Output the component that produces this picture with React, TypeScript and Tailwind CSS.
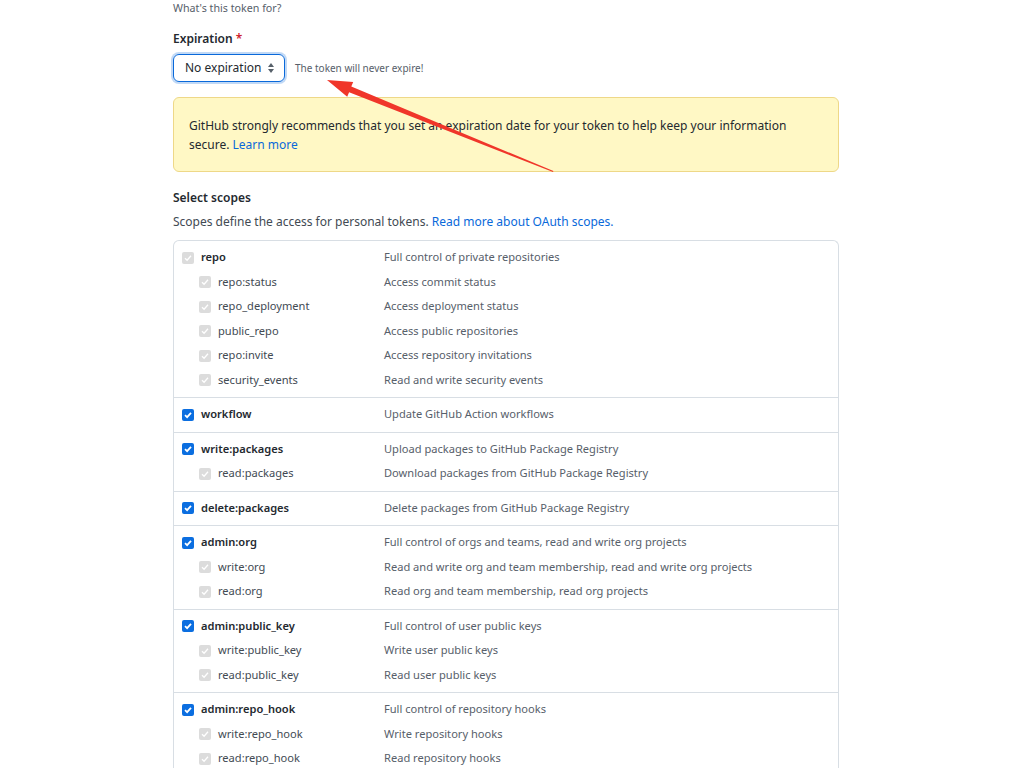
import React from 'react';

type Scope = { name: string; desc: string; checked?: boolean; subs: [string, string][] };

const SCOPES: Scope[] = [
  {
    name: 'repo',
    desc: 'Full control of private repositories',
    subs: [
      ['repo:status', 'Access commit status'],
      ['repo_deployment', 'Access deployment status'],
      ['public_repo', 'Access public repositories'],
      ['repo:invite', 'Access repository invitations'],
      ['security_events', 'Read and write security events'],
    ],
  },
  { name: 'workflow', desc: 'Update GitHub Action workflows', checked: true, subs: [] },
  {
    name: 'write:packages',
    desc: 'Upload packages to GitHub Package Registry',
    checked: true,
    subs: [['read:packages', 'Download packages from GitHub Package Registry']],
  },
  { name: 'delete:packages', desc: 'Delete packages from GitHub Package Registry', checked: true, subs: [] },
  {
    name: 'admin:org',
    desc: 'Full control of orgs and teams, read and write org projects',
    checked: true,
    subs: [
      ['write:org', 'Read and write org and team membership, read and write org projects'],
      ['read:org', 'Read org and team membership, read org projects'],
    ],
  },
  {
    name: 'admin:public_key',
    desc: 'Full control of user public keys',
    checked: true,
    subs: [
      ['write:public_key', 'Write user public keys'],
      ['read:public_key', 'Read user public keys'],
    ],
  },
  {
    name: 'admin:repo_hook',
    desc: 'Full control of repository hooks',
    checked: true,
    subs: [
      ['write:repo_hook', 'Write repository hooks'],
      ['read:repo_hook', 'Read repository hooks'],
    ],
  },
];

const Box = ({ on }: { on?: boolean }) => (
  <span
    className={
      on
        ? 'w-[12px] h-[12px] rounded-[2px] bg-[#0b6ee0] flex items-center justify-center shrink-0'
        : 'w-[12px] h-[12px] rounded-[2px] bg-[#dcdcdc] flex items-center justify-center shrink-0'
    }
  >
    <svg width="10" height="10" viewBox="0 0 10 10">
      <path d="M2 5.2 L4.1 7.2 L8 2.8" fill="none" stroke="white" strokeWidth={on ? 1.8 : 1.3} />
    </svg>
  </span>
);

export default function App() {
  return (
    <div className="relative min-h-[768px] bg-white text-[12px] text-[#24292f]" style={{ fontFamily: '"Noto Sans", "Open Sans", Arial, sans-serif' }}>
      <div className="ml-[173px] w-[666px]">
        <div className="text-[10.7px] text-[#57606a] leading-[16px]">What's this token for?</div>

        <div className="mt-[15px] font-semibold leading-[16px]">
          Expiration <span className="text-[#cf222e]">*</span>
        </div>
        <div className="mt-[7px] flex items-center gap-[10px]">
          <div className="h-[28px] w-[112px] rounded-[6px] border border-[#0969da] shadow-[0_0_0_2px_rgba(9,105,218,0.25)] flex items-center justify-between pl-[11px] pr-[9px] text-[12px] whitespace-nowrap">
            <span>No expiration</span>
            <svg width="8" height="12" viewBox="0 0 8 12">
              <path d="M4 1 L7 5 H1 Z M4 11 L1 7 H7 Z" fill="#57606a" />
            </svg>
          </div>
          <span className="text-[10px] text-[#57606a]">The token will never expire!</span>
        </div>

        <div className="mt-[15px] h-[75px] rounded-[6px] border border-[#eed888] bg-[#fff8c5] px-[15px] pt-[18px] leading-[19px] text-[#24292f]">
          GitHub strongly recommends that you set an expiration date for your token to help keep your information secure.{' '}
          <span className="text-[#0969da]">Learn more</span>
        </div>

        <div className="mt-[18px] font-semibold leading-[16px]">Select scopes</div>
        <div className="mt-[8px] leading-[16px] text-[#424a53]">
          Scopes define the access for personal tokens. <span className="text-[#0969da]">Read more about OAuth scopes.</span>
        </div>

        <div className="mt-[10px] rounded-t-[6px] border-x border-t border-[#d8dee4] text-[11.1px]">
          {SCOPES.map((s, i) => (
            <div key={s.name} className={i === 0 ? 'pt-[4.5px] pb-[4.5px]' : 'pt-[4.5px] pb-[4.5px] border-t border-[#d8dee4]'}>
              <div className="h-[24.5px] flex items-center">
                <div className="w-[210px] flex items-center gap-[7px] pl-[8px]">
                  <Box on={s.checked} />
                  <span className="font-semibold text-[#24292f]">{s.name}</span>
                </div>
                <span className="text-[#57606a]">{s.desc}</span>
              </div>
              {s.subs.map(([n, d]) => (
                <div key={n} className="h-[24.5px] flex items-center">
                  <div className="w-[210px] flex items-center gap-[7px] pl-[25px]">
                    <Box />
                    <span className="text-[#424a53]">{n}</span>
                  </div>
                  <span className="text-[#57606a]">{d}</span>
                </div>
              ))}
            </div>
          ))}
        </div>
      </div>

      <svg className="absolute left-0 top-0 pointer-events-none" width="1024" height="768">
        <polygon
          points="553,172 553.4,171 351.3,86.6 353.2,82 327,80 347.2,96.8 349.1,92.2"
          fill="#f0362a"
        />
      </svg>
    </div>
  );
}
